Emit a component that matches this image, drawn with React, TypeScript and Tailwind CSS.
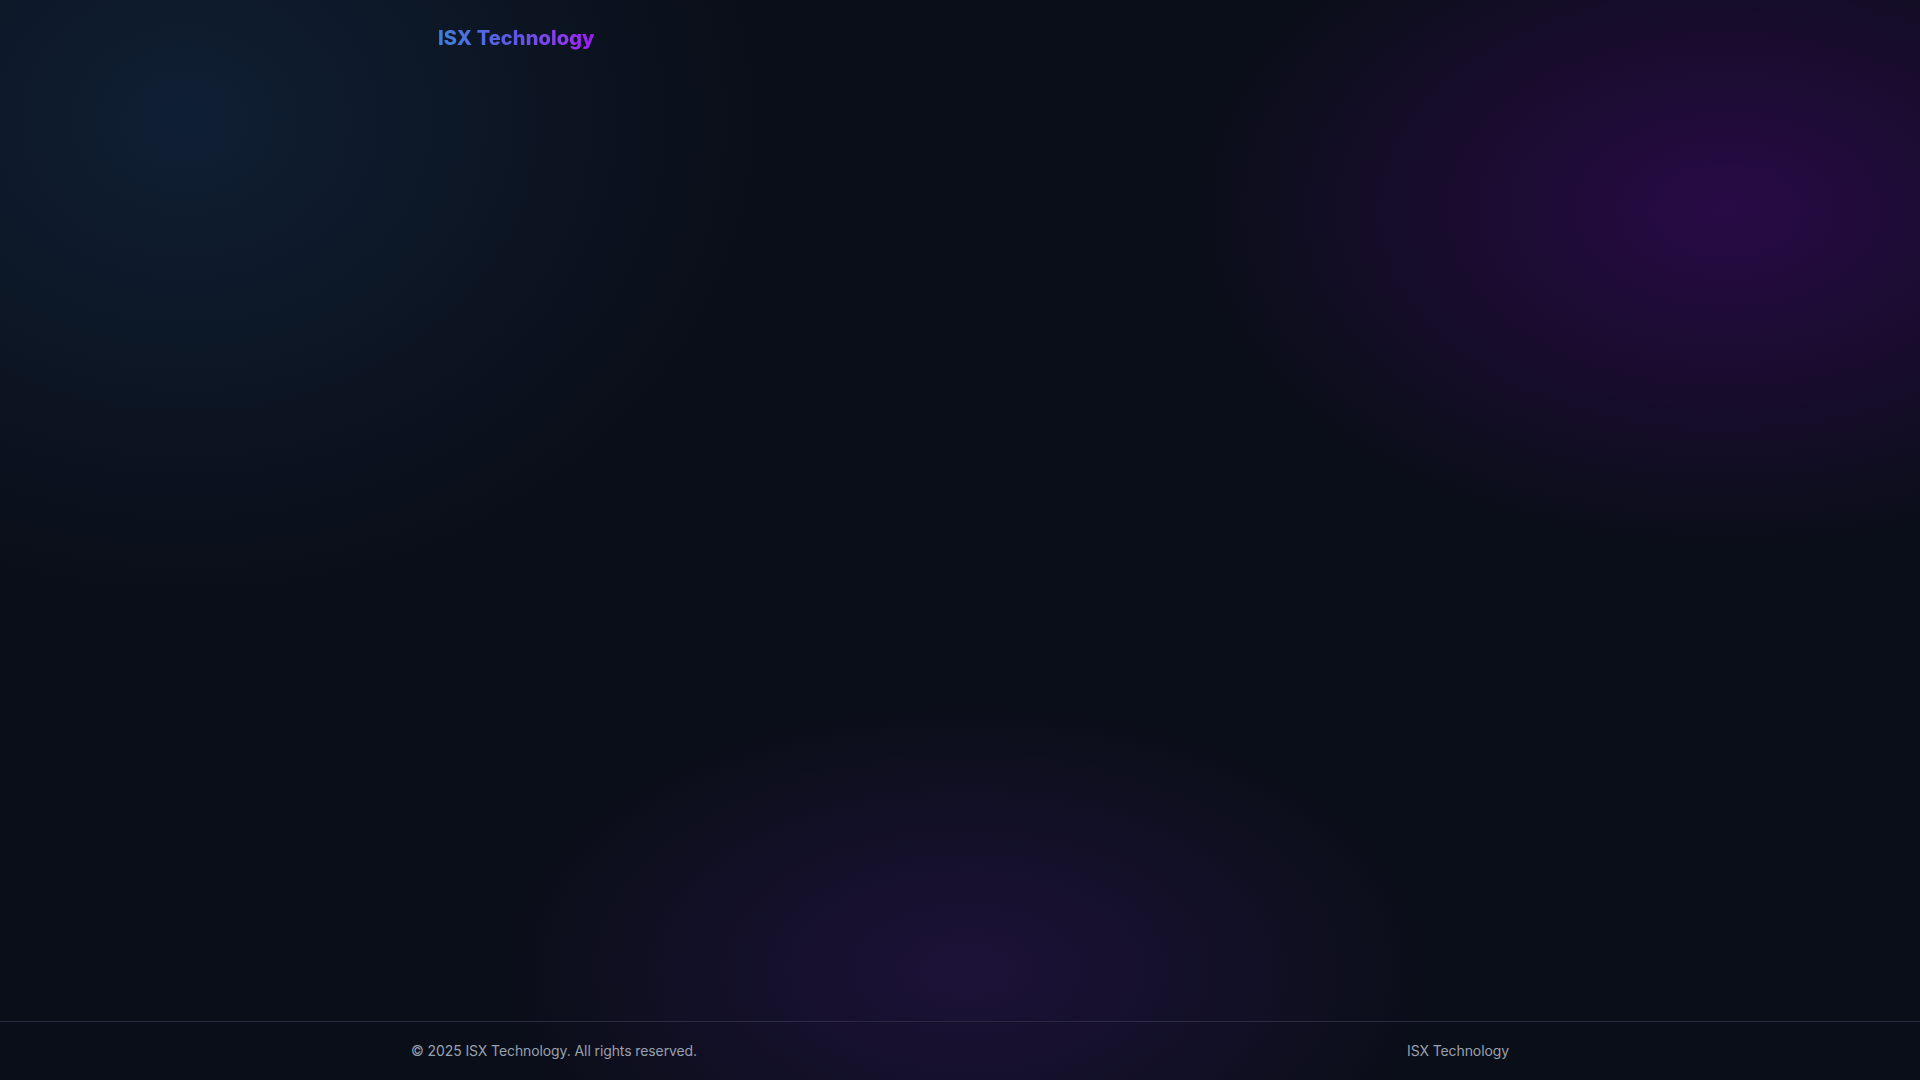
export default function App() {
  return (
    <div
      className="flex min-h-screen flex-col bg-[#0a0e18] font-['Inter',sans-serif]"
      style={{
        backgroundImage: [
          "radial-gradient(ellipse 540px 340px at 1727px 210px, rgba(42,10,72,0.95), rgba(42,10,72,0) 100%)",
          "radial-gradient(ellipse 580px 480px at 185px 120px, rgba(16,34,56,0.85), rgba(16,34,56,0) 100%)",
          "radial-gradient(ellipse 470px 270px at 967px 970px, rgba(30,18,60,0.9), rgba(30,18,60,0) 100%)",
        ].join(","),
      }}
    >
      <header className="h-[76px]">
        <div className="mx-auto flex h-full max-w-[1044px] items-center">
          <span className="bg-gradient-to-r from-[#3b7fdc] via-[#5f55e6] to-[#a30ff7] bg-clip-text text-xl font-extrabold tracking-[0.1px] text-transparent">
            ISX Technology
          </span>
        </div>
      </header>

      <main className="flex-1" />

      <footer className="h-[59px] border-t border-[#2a2a40]">
        <div className="mx-auto flex h-full max-w-6xl items-center justify-between px-[27px] text-sm tracking-[-0.1px] text-gray-400">
          <span>© 2025 ISX Technology. All rights reserved.</span>
          <span>ISX Technology</span>
        </div>
      </footer>
    </div>
  );
}
